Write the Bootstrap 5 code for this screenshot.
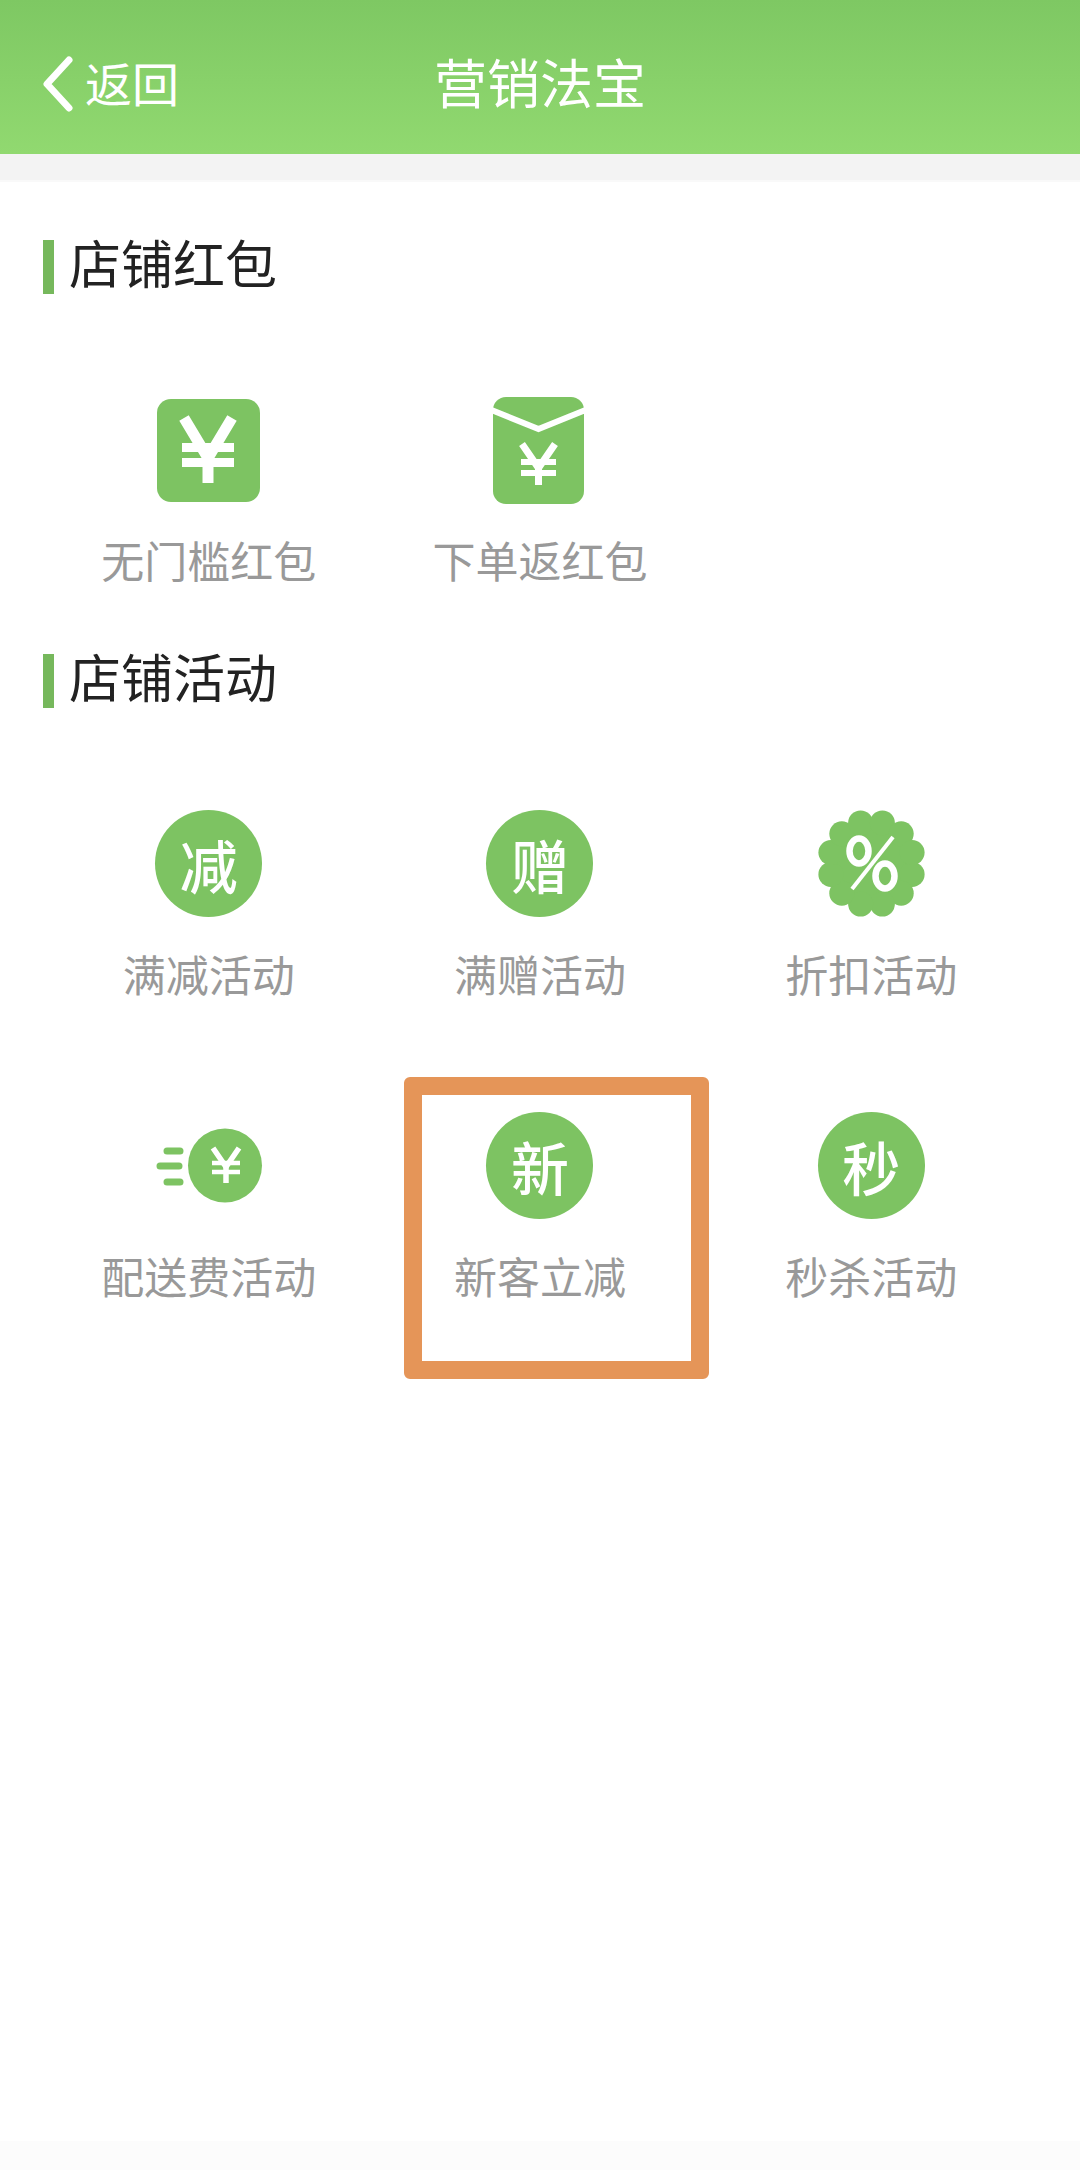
<!DOCTYPE html>
<html lang="zh-CN">
<head>
  <meta charset="UTF-8">
  <title>营销法宝</title>
  <link href="https://cdn.jsdelivr.net/npm/bootstrap@5.3.0/dist/css/bootstrap.min.css" rel="stylesheet">
  <style>
    body { font-family: "Noto Sans CJK SC", "Liberation Sans", sans-serif; background: #fff; min-height: 2170px; }
    .top-bar { height: 154px; background: linear-gradient(180deg, #7ec863 0%, #91d970 100%); padding: 8px 43px 0; display: grid; grid-template-columns: 1fr auto 1fr; align-items: center; }
    .back-link { gap: 12px; font-size: 47px; line-height: 1; }
    .top-title { font-size: 53px; line-height: 1; }
    .gray-gap { height: 28px; background: #f3f3f3; border-bottom: 2px solid #f9f9f9; }
    .promo-section { padding: 0 43px; }
    .sec-one { padding-top: 58px; }
    .sec-two { padding-top: 2px; }
    .sec-head { height: 54px; margin-bottom: 102px; gap: 15px; font-size: 52px; line-height: 44px; color: #222; }
    .sec-head::before { content: ""; width: 11px; height: 54px; background: #76b85c; }
    .sec-head span { margin-bottom: 10px; }
    .promo-row { row-gap: 46px; }
    .promo-cell { height: 256px; }
    .icon-box { width: 107px; height: 107px; display: block; overflow: visible; }
    .round-icon { background: #7dc362; color: #fff; font-size: 58px; font-weight: 500; line-height: 1; }
    .promo-label { margin-top: 26px; font-size: 43px; line-height: 60px; color: #999; }
    .mark-box { left: 30px; top: -35px; width: 305px; height: 302px; border: 18px solid #e59558; border-radius: 6px; }
    .bottom-strip { height: 29px; background: #fcfcfc; }
  </style>
</head>
<body class="d-flex flex-column">

  <header class="top-bar text-white">
    <div class="back-link d-flex align-items-center">
      <svg width="30" height="62" viewBox="0 0 30 62"><path d="M26 10 L4 34 L26 58" fill="none" stroke="#fff" stroke-width="7" stroke-linecap="round" stroke-linejoin="round"/></svg>
      <span>返回</span>
    </div>
    <div class="top-title">营销法宝</div>
    <div></div>
  </header>
  <div class="gray-gap"></div>

  <section class="promo-section sec-one">
    <h2 class="sec-head d-flex align-items-center fw-normal"><span>店铺红包</span></h2>
    <div class="row row-cols-3 g-0 promo-row">
      <div class="col promo-cell d-flex flex-column align-items-center">
        <svg class="icon-box" viewBox="0 0 107 107">
          <rect x="2" y="3" width="103" height="103" rx="14" fill="#7dc362"/>
          <path d="M29 22 L53 62 L77 22" fill="none" stroke="#fff" stroke-width="11"/>
          <path d="M27 51.5 H79 M27 66.5 H79" stroke="#fff" stroke-width="9"/>
          <path d="M53 58 V87" stroke="#fff" stroke-width="11"/>
        </svg>
        <div class="promo-label">无门槛红包</div>
      </div>
      <div class="col promo-cell d-flex flex-column align-items-center">
        <svg class="icon-box" viewBox="0 0 107 107">
          <rect x="7" y="1" width="91" height="107" rx="13" fill="#7dc362"/>
          <path d="M3 13 L52.5 33 L102 13" fill="none" stroke="#fff" stroke-width="6"/>
          <path d="M36 48 L52.5 72 L69 48" fill="none" stroke="#fff" stroke-width="7"/>
          <path d="M35 66 H70 M35 77 H70" stroke="#fff" stroke-width="6"/>
          <path d="M52.5 66 V89" stroke="#fff" stroke-width="7"/>
        </svg>
        <div class="promo-label">下单返红包</div>
      </div>
    </div>
  </section>

  <section class="promo-section sec-two">
    <h2 class="sec-head d-flex align-items-center fw-normal"><span>店铺活动</span></h2>
    <div class="row row-cols-3 g-0 promo-row">
      <div class="col promo-cell d-flex flex-column align-items-center">
        <div class="icon-box round-icon rounded-circle d-flex align-items-center justify-content-center">减</div>
        <div class="promo-label">满减活动</div>
      </div>
      <div class="col promo-cell d-flex flex-column align-items-center">
        <div class="icon-box round-icon rounded-circle d-flex align-items-center justify-content-center">赠</div>
        <div class="promo-label">满赠活动</div>
      </div>
      <div class="col promo-cell d-flex flex-column align-items-center">
        <svg class="icon-box" viewBox="0 0 107 107">
          <g fill="#7dc362">
            <circle cx="53.5" cy="53.5" r="46"/>
            <circle cx="94.1" cy="64.4" r="12.5"/><circle cx="83.2" cy="83.2" r="12.5"/>
            <circle cx="64.4" cy="94.1" r="12.5"/><circle cx="42.6" cy="94.1" r="12.5"/>
            <circle cx="23.8" cy="83.2" r="12.5"/><circle cx="12.9" cy="64.4" r="12.5"/>
            <circle cx="12.9" cy="42.6" r="12.5"/><circle cx="23.8" cy="23.8" r="12.5"/>
            <circle cx="42.6" cy="12.9" r="12.5"/><circle cx="64.4" cy="12.9" r="12.5"/>
            <circle cx="83.2" cy="23.8" r="12.5"/><circle cx="94.1" cy="42.6" r="12.5"/>
          </g>
          <g fill="none" stroke="#fff" stroke-width="6.5">
            <ellipse cx="41" cy="41" rx="9.5" ry="12.5"/>
            <ellipse cx="67" cy="66" rx="9.5" ry="12.5"/>
            <path d="M75 27 L34 79" stroke-width="4"/>
          </g>
        </svg>
        <div class="promo-label">折扣活动</div>
      </div>
      <div class="col promo-cell d-flex flex-column align-items-center">
        <svg class="icon-box" viewBox="0 0 107 107">
          <circle cx="70" cy="53.5" r="37" fill="#7dc362"/>
          <path d="M12 39 H25 M5 54 H24 M12 70 H25" stroke="#7dc362" stroke-width="7" stroke-linecap="round"/>
          <path d="M58 36 L71 55 L84 36" fill="none" stroke="#fff" stroke-width="5.5"/>
          <path d="M57 51 H85 M57 60 H85" stroke="#fff" stroke-width="4.5"/>
          <path d="M71 51 V71" stroke="#fff" stroke-width="5.5"/>
        </svg>
        <div class="promo-label">配送费活动</div>
      </div>
      <div class="col promo-cell d-flex flex-column align-items-center position-relative">
        <div class="icon-box round-icon rounded-circle d-flex align-items-center justify-content-center">新</div>
        <div class="promo-label">新客立减</div>
        <div class="mark-box position-absolute"></div>
      </div>
      <div class="col promo-cell d-flex flex-column align-items-center">
        <div class="icon-box round-icon rounded-circle d-flex align-items-center justify-content-center">秒</div>
        <div class="promo-label">秒杀活动</div>
      </div>
    </div>
  </section>

  <div class="bottom-strip mt-auto"></div>

</body>
</html>
